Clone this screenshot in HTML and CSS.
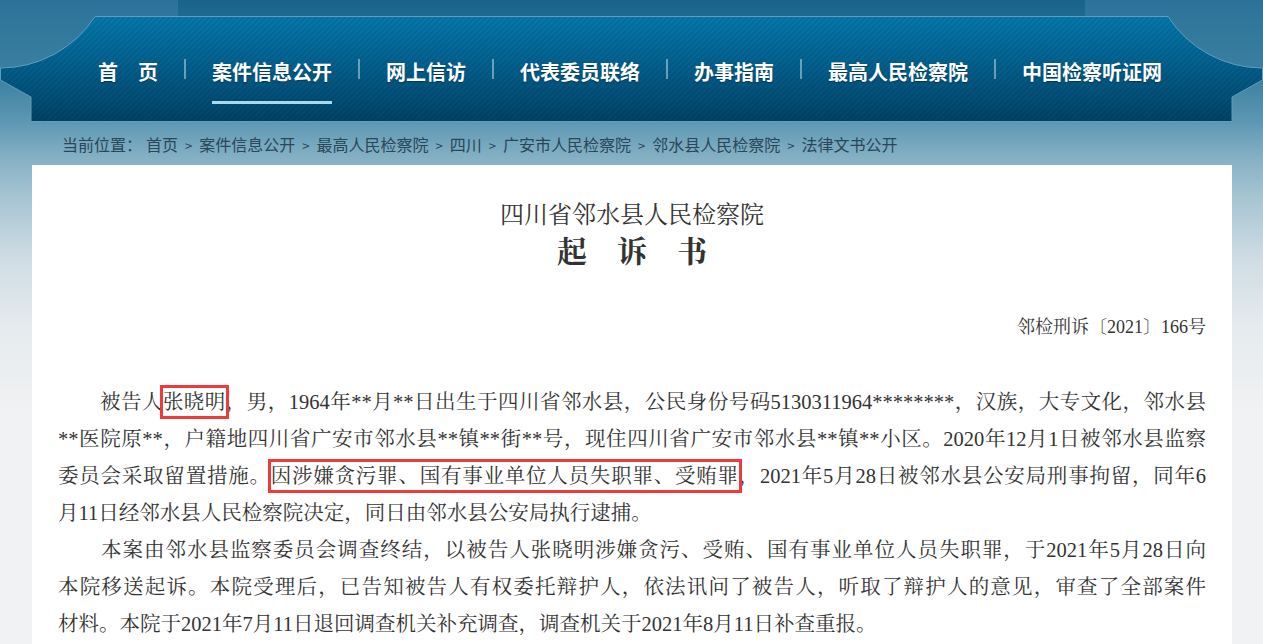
FILE: index.html
```html
<!DOCTYPE html>
<html lang="zh-CN">
<head>
    <meta charset="UTF-8">
    <meta name="viewport" content="width=device-width, initial-scale=1.0">
    <title>法律文书公开 - 邻水县人民检察院</title>
    <link rel="stylesheet" href="styles.css">
</head>
<body>
    <div class="header">
        <div class="top-tab"></div>
        <div class="nav">
            <svg class="nav-bg" width="1263" height="106" viewBox="0 0 1263 106">
                <defs>
                    <linearGradient id="navFill" x1="0" y1="0" x2="0" y2="1">
                        <stop offset="0" stop-color="#047aaf"/>
                        <stop offset="0.55" stop-color="#035c89"/>
                        <stop offset="1" stop-color="#024366"/>
                    </linearGradient>
                    <pattern id="navStripes" width="4" height="4" patternUnits="userSpaceOnUse" patternTransform="rotate(45)">
                        <rect width="2" height="4" fill="#000" fill-opacity="0.09"/>
                    </pattern>
                </defs>
                <path d="M95 0.5 L1168 0.5 A113 113 0 0 0 1262.5 52 L1262.5 64 L1232 81 L1232 105.5 L31 105.5 L31 81 L0.5 64 L0.5 52 A113 113 0 0 0 95 0.5 Z" fill="url(#navFill)"/>
                <path d="M95 0.5 L1168 0.5 A113 113 0 0 0 1262.5 52 L1262.5 64 L1232 81 L1232 105.5 L31 105.5 L31 81 L0.5 64 L0.5 52 A113 113 0 0 0 95 0.5 Z" fill="url(#navStripes)" stroke="#5f9dbd" stroke-width="1"/>
            </svg>
            <ul class="menu">
                <li><a href="#">首　页</a></li>
                <li><a href="#" class="active">案件信息公开</a></li>
                <li><a href="#">网上信访</a></li>
                <li><a href="#">代表委员联络</a></li>
                <li><a href="#">办事指南</a></li>
                <li><a href="#">最高人民检察院</a></li>
                <li><a href="#">中国检察听证网</a></li>
            </ul>
        </div>
        <div class="crumb">
            <span class="crumb-label">当前位置：</span><a href="#">首页</a><span class="sep">&gt;</span><a href="#">案件信息公开</a><span class="sep">&gt;</span><a href="#">最高人民检察院</a><span class="sep">&gt;</span><a href="#">四川</a><span class="sep">&gt;</span><a href="#">广安市人民检察院</a><span class="sep">&gt;</span><a href="#">邻水县人民检察院</a><span class="sep">&gt;</span><a href="#">法律文书公开</a>
        </div>
    </div>

    <div class="doc">
        <h1 class="org">四川省邻水县人民检察院</h1>
        <h2 class="doc-type">起　诉　书</h2>
        <div class="doc-no">邻检刑诉〔2021〕166号</div>

        <p class="para first"><span class="ln">　　被告人<span class="mark">张晓明</span>，男，1964年**月**日出生于四川省邻水县，公民身份号码5130311964********，汉族，大专文化，邻水县</span><span class="ln">**医院原**，户籍地四川省广安市邻水县**镇**街**号，现住四川省广安市邻水县**镇**小区。2020年12月1日被邻水县监察</span><span class="ln">委员会采取留置措施。<span class="mark">因涉嫌贪污罪、国有事业单位人员失职罪、受贿罪</span>，2021年5月28日被邻水县公安局刑事拘留，同年6</span><span class="ln end">月11日经邻水县人民检察院决定，同日由邻水县公安局执行逮捕。</span></p>

        <p class="para"><span class="ln">　　本案由邻水县监察委员会调查终结，以被告人张晓明涉嫌贪污、受贿、国有事业单位人员失职罪，于2021年5月28日向</span><span class="ln">本院移送起诉。本院受理后，已告知被告人有权委托辩护人，依法讯问了被告人，听取了辩护人的意见，审查了全部案件</span><span class="ln end">材料。本院于2021年7月11日退回调查机关补充调查，调查机关于2021年8月11日补查重报。</span></p>
    </div>
</body>
</html>
```

FILE: styles.css
```css
body {
    margin: 0;
    padding: 0;
    font-family: "Noto Sans CJK SC", "Liberation Sans", sans-serif;
    background-color: #f2f2f2;
    background-image: linear-gradient(180deg, #2b7398 0, #3d81a2 80px, #5e97b3 122px, #77a8bf 145px, #8cb4c6 165px, #a9c5d3 200px, #cfdde4 260px, #e6ebee 330px, #f1f2f3 420px);
    background-repeat: no-repeat;
    color: #222;
}
a {
    color: inherit;
    text-decoration: none;
}
.top-tab {
    width: 907px;
    height: 16px;
    margin: 0 auto;
    background: linear-gradient(180deg, #1a6288, #1e6a8f);
}
.nav {
    position: relative;
    height: 106px;
}
.nav-bg {
    position: absolute;
    left: 0;
    top: 0;
}
.menu {
    position: relative;
    display: flex;
    margin: 0;
    padding: 40px 0 0 72px;
    list-style: none;
}
.menu li {
    display: flex;
    align-items: flex-start;
}
.menu li + li::before {
    content: "";
    width: 2px;
    height: 20px;
    margin-top: 3px;
    background: rgba(190, 215, 230, 0.55);
}
.menu a {
    display: block;
    margin: 0 26px;
    padding-bottom: 13px;
    border-bottom: 3px solid transparent;
    font-size: 20px;
    font-weight: bold;
    line-height: 32px;
    color: #fff;
    text-shadow: 0 1px 1px rgba(0, 30, 50, 0.5);
}
.menu a.active {
    border-bottom-color: #a9d8ef;
}
.crumb {
    height: 43px;
    padding-left: 62px;
    font-size: 16px;
    line-height: 45px;
    color: #2a4657;
}
.crumb-label {
    margin-right: 4px;
}
.sep {
    margin: 0 7px;
    font-size: 13px;
}
.doc {
    margin: 0 31px 0 32px;
    padding: 32px 26px 40px;
    background: #fff;
    font-family: "Liberation Serif", "Noto Serif CJK SC", "Noto Sans CJK SC", serif;
    color: #333;
}
.org {
    margin: 0;
    font-size: 24px;
    font-weight: normal;
    line-height: 36px;
    text-align: center;
}
.doc-type {
    margin: 0;
    font-size: 30px;
    font-weight: bold;
    line-height: 38px;
    text-align: center;
}
.doc-no {
    margin-top: 41px;
    font-size: 18px;
    line-height: 30px;
    text-align: right;
}
.para {
    margin: 0;
    font-size: 20.5px;
    line-height: 37px;
}
.para.first {
    margin-top: 42px;
}
.ln {
    display: block;
    text-align: justify;
    text-align-last: justify;
}
.ln.end {
    text-align: left;
    text-align-last: left;
}
.mark {
    padding: 3px 0;
    outline: 3px solid #f03a3a;
}
```
